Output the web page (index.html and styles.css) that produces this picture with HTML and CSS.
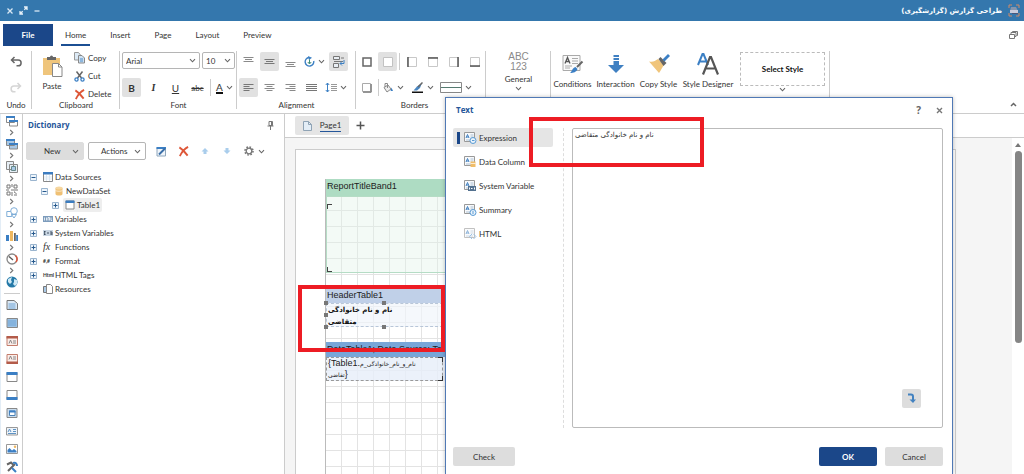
FILE: index.html
```
<!DOCTYPE html>
<html lang="en">
<head>
<meta charset="utf-8">
<title>Report designer</title>
<link rel="stylesheet" href="styles.css">
</head>
<body>
<svg class="defs" aria-hidden="true">
  <symbol id="chev" viewBox="0 0 7 7"><path d="M1 2.2 3.5 4.8 6 2.2" fill="none" stroke="#666" stroke-width="1.1"/></symbol>
  <symbol id="chev-r" viewBox="0 0 7 7"><path d="M2.2 1 4.8 3.5 2.2 6" fill="none" stroke="#777" stroke-width="1.1"/></symbol>
  <symbol id="cross" viewBox="0 0 12 12"><path d="M1.5 1.5C4 3 8 7 10.5 10.5M11 1C7 3 4 7 2 11" fill="none" stroke="#de5738" stroke-width="2"/></symbol>
  <symbol id="text-card" viewBox="0 0 12 12"><path d="M.5.5h10v9H.5z" fill="#f7f9fb" stroke="#999"/><path d="M2 6 3.5 2.500 5 6M2.500 5h2" fill="none" stroke="#3f7fc0"/><path d="M6.500 3h3M6.500 5h3M2 8h7" stroke="#9db4cb" stroke-width=".8"/></symbol>
  <symbol id="plus-box" viewBox="0 0 7 7"><path d="M.5.5h6v6h-6z" fill="#eef5fb" stroke="#9bb5cf"/><path d="M1.500 3.500h4M3.500 1.500v4" stroke="#27598d"/></symbol>
  <symbol id="minus-box" viewBox="0 0 7 7"><path d="M.5.5h6v6h-6z" fill="#eef5fb" stroke="#9bb5cf"/><path d="M1.500 3.500h4" stroke="#27598d"/></symbol>
  <symbol id="table" viewBox="0 0 10 10"><path d="M.5.5h9v9h-9z" fill="#fff" stroke="#888"/><path d="M0 0h10v2.500H0z" fill="#3b7cc0"/><path d="M3.500 3v6M6.500 3v6M1 5h8M1 7h8" stroke="#cfe0ee" stroke-width=".7"/></symbol>
</svg>

<div class="app">
  <header class="titlebar">
    <div class="window-buttons">
      <button aria-label="Close"><svg width="8" height="8" viewBox="0 0 8 8"><path d="M1.500 1.500l5 5M6.500 1.500l-5 5" stroke="#d9e8f4" stroke-width="1.300"/></svg></button>
      <button aria-label="Resize"><svg width="9" height="9" viewBox="0 0 9 9"><path d="M5 1h3v3M8 1 5.300 3.700M4 8H1V5M1 8l2.700-2.700" fill="none" stroke="#e6f1f9" stroke-width="1.300"/></svg></button>
      <button aria-label="Minimize"><svg width="8" height="8" viewBox="0 0 8 8"><path d="M1.500 4h5" stroke="#d9e8f4" stroke-width="1.300"/></svg></button>
    </div>
    <div class="window-title" dir="rtl">
      <svg width="12" height="13" viewBox="0 0 12 13"><path d="M1 4V1h3M8 1h3v3M11 9v3H8M4 12H1V9" fill="none" stroke="#d08b66"/><path d="M3 3h5l2 4H2z" fill="#8595ad"/><path d="M2 6h8v3H2z" fill="#c9ccdc"/><path d="M4 9h6v1H4z" fill="#4a5678"/></svg>
      <span>طراحی گزارش (گزارشگیری)</span>
    </div>
  </header>

  <nav class="tabs">
    <button class="tab file">File</button>
    <button class="tab home">Home</button>
    <button class="tab">Insert</button>
    <button class="tab">Page</button>
    <button class="tab">Layout</button>
    <button class="tab">Preview</button>
    <button class="restore" aria-label="Restore"><svg width="9" height="8" viewBox="0 0 9 8"><path d="M.5 3.500h5v4h-5zM2 3V1.500h5v4H6M3.500 1V.5h5v4H7.500" fill="none" stroke="#777"/></svg></button>
  </nav>

  <section class="ribbon">
    <div class="group undo">
      <button class="ib" aria-label="Undo"><svg width="12" height="12" viewBox="0 0 12 12"><path d="M4.500 1 1.500 4l3 3M2 4h6.200a2.800 2.800 0 0 1 0 5.800H6.500" fill="none" stroke="#666" stroke-width="1.500"/></svg></button>
      <button class="ib" aria-label="Redo"><svg width="12" height="12" viewBox="0 0 12 12"><path d="M7.500 1l3 3-3 3M10 4H4a2.800 2.800 0 0 0 0 5.800h1.500" fill="none" stroke="#d5d5d5" stroke-width="1.500"/></svg></button>
      <span class="cap">Undo</span>
    </div>
    <div class="group clipboard">
      <div class="clip-tools">
        <button class="paste"><svg width="21" height="22" viewBox="0 0 21 22"><path d="M1 3h17v17H1z" fill="#efc57c"/><path d="M5 5V2h3a1.500 1.500 0 0 1 3 0h3v3z" fill="#666"/><path d="M10.500 8.500h6l3.500 3.500v9.500h-9.500z" fill="#fff" stroke="#888"/><path d="M16.500 8.500V12H20" fill="none" stroke="#888"/></svg><span>Paste</span></button>
        <div class="clip-list">
          <button><svg width="11" height="12" viewBox="0 0 11 12"><path d="M.5.5h4L6.500 3v5h-6z" fill="#dceaf6" stroke="#999"/><path d="M4.500 3.500h3.500l2.500 2.500v5h-6z" fill="#cfe2f3" stroke="#888"/><path d="M6 7h3M6 9h3" stroke="#4d8cc8"/></svg>Copy</button>
          <button><svg width="11" height="11" viewBox="0 0 11 11"><path d="M2.500.5 7.500 7M8.500.5 3.500 7" stroke="#666" stroke-width="1.500"/><circle cx="2.500" cy="8.500" r="1.600" fill="none" stroke="#3b7fc4" stroke-width="1.300"/><circle cx="8.500" cy="8.500" r="1.600" fill="none" stroke="#3b7fc4" stroke-width="1.300"/></svg>Cut</button>
          <button><svg width="11" height="11"><use href="#cross"/></svg>Delete</button>
        </div>
      </div>
      <span class="cap">Clipboard</span>
    </div>
    <div class="group font">
      <div class="row">
        <label class="pick family"><select aria-label="Font"><option>Arial</option></select><svg width="7" height="7"><use href="#chev"/></svg></label>
        <label class="pick size"><select aria-label="Font size"><option>10</option></select><svg width="7" height="7"><use href="#chev"/></svg></label>
      </div>
      <div class="row spaced">
        <button class="ib on fb">B</button>
        <button class="ib fi">I</button>
        <button class="ib fu">U</button>
        <button class="ib fs">abc</button>
        <i class="sep"></i>
        <button class="ib drop fa"><span>A</span><svg width="7" height="7"><use href="#chev"/></svg></button>
      </div>
      <span class="cap">Font</span>
    </div>
    <div class="group align">
      <div class="row">
        <button class="ib" aria-label="Align top"><svg width="11" height="11" viewBox="0 0 11 11"><path d="M.5 1.500h10M2 3.500h7M.5 5.500h10" stroke="#8a8a8a"/></svg></button>
        <button class="ib on" aria-label="Align middle"><svg width="11" height="11" viewBox="0 0 11 11"><path d="M.5 3.500h10M2 5.500h7M.5 7.500h10" stroke="#777"/></svg></button>
        <button class="ib" aria-label="Align bottom"><svg width="11" height="11" viewBox="0 0 11 11"><path d="M.5 6.500h10M2 8.500h7M.5 10.500h10" stroke="#8a8a8a"/></svg></button>
        <button class="ib drop" aria-label="Rotate"><svg width="11" height="11" viewBox="0 0 11 11"><path d="M5 1.500a4.300 4.300 0 1 0 4.700 3.500" fill="none" stroke="#3d80c4" stroke-width="1.400"/><path d="M4 0l4 1.700L5 4z" fill="#3d80c4"/><path d="M5.500 3.500v4M3.800 6l1.700 2 1.700-2" fill="none" stroke="#3f8b75"/></svg><svg width="7" height="7"><use href="#chev"/></svg></button>
        <button class="ib on" aria-label="Wrap"><svg width="12" height="12" viewBox="0 0 12 12"><path d="M.5.5h6v3h-6zM.5 7.500h5v4h-5z" fill="#e9eef3" stroke="#777"/><path d="M1 5.500h9M8 2h3" stroke="#777"/><path d="M11 4v3.500H7M9 5.500l-2 2 2 2" fill="none" stroke="#3d80c4"/></svg></button>
      </div>
      <div class="row">
        <button class="ib on" aria-label="Left"><svg width="11" height="11" viewBox="0 0 11 11"><path d="M.5 2.500h10M.5 4.500h6M.5 6.500h10M.5 8.500h6" stroke="#777"/></svg></button>
        <button class="ib" aria-label="Center"><svg width="11" height="11" viewBox="0 0 11 11"><path d="M.5 2.500h10M2.500 4.500h6M.5 6.500h10M2.500 8.500h6" stroke="#8a8a8a"/></svg></button>
        <button class="ib" aria-label="Right"><svg width="11" height="11" viewBox="0 0 11 11"><path d="M.5 2.500h10M4.500 4.500h6M.5 6.500h10M4.500 8.500h6" stroke="#8a8a8a"/></svg></button>
        <button class="ib" aria-label="Justify"><svg width="11" height="11" viewBox="0 0 11 11"><path d="M0 2.500h11M0 4.500h11M0 6.500h11M0 8.500h11" stroke="#777"/></svg></button>
        <button class="ib drop" aria-label="Line spacing"><svg width="12" height="11" viewBox="0 0 12 11"><path d="M2.500 1v9M.8 3l1.700-2 1.700 2M.8 8l1.700 2 1.700-2" fill="none" stroke="#3d80c4"/><path d="M6 2.500h6M6 4.500h6M6 6.500h6M6 8.500h6" stroke="#999"/></svg><svg width="7" height="7"><use href="#chev"/></svg></button>
      </div>
      <span class="cap">Alignment</span>
    </div>
    <div class="group borders">
      <div class="row">
        <button class="ib" aria-label="All borders"><svg width="10" height="10" viewBox="0 0 10 10"><path d="M1 1h8v8H1z" fill="#fff" stroke="#666" stroke-width="1.500"/></svg></button>
        <button class="ib on" aria-label="No border"><svg width="10" height="10" viewBox="0 0 10 10"><path d="M.5.5h9v9h-9z" fill="#fff" stroke="#c2c2c2"/></svg></button>
        <i class="sep"></i>
        <button class="ib" aria-label="Left border"><svg width="10" height="10" viewBox="0 0 10 10"><path d="M.5.5h9v9h-9z" fill="#fff" stroke="#c8c8c8"/><path d="M1 0v10" stroke="#555" stroke-width="1.500"/></svg></button>
        <button class="ib" aria-label="Top border"><svg width="10" height="10" viewBox="0 0 10 10"><path d="M.5.5h9v9h-9z" fill="#fff" stroke="#c8c8c8"/><path d="M0 1h10" stroke="#555" stroke-width="1.500"/></svg></button>
        <button class="ib" aria-label="Right border"><svg width="10" height="10" viewBox="0 0 10 10"><path d="M.5.5h9v9h-9z" fill="#fff" stroke="#c8c8c8"/><path d="M9 0v10" stroke="#555" stroke-width="1.500"/></svg></button>
        <button class="ib" aria-label="Bottom border"><svg width="10" height="10" viewBox="0 0 10 10"><path d="M.5.5h9v9h-9z" fill="#fff" stroke="#c8c8c8"/><path d="M0 9h10" stroke="#555" stroke-width="1.500"/></svg></button>
      </div>
      <div class="row">
        <button class="ib" aria-label="Shadow"><svg width="10" height="10" viewBox="0 0 10 10"><path d="M.5.5h8v8h-8z" fill="#fff" stroke="#aaa"/><path d="M1 9.200h8.200V1" fill="none" stroke="#666"/></svg></button>
        <i class="sep"></i>
        <button class="ib drop" aria-label="Fill"><svg width="11" height="11" viewBox="0 0 11 11"><path d="M1 5.500 5 3l3 4-4 3z" fill="#eee" stroke="#888"/><path d="M2 5V1.500h2.500V6" fill="none" stroke="#888"/><path d="M8.500 5.500 10 9H7.500z" fill="#3d80c4"/></svg><svg width="7" height="7"><use href="#chev"/></svg></button>
        <button class="ib drop pen" aria-label="Border color"><svg width="12" height="12" viewBox="0 0 12 12"><path d="M1.500 8.500 5 4.500l5-3.500-2 5-3 2.500z" fill="#4a87c2"/><path d="M6 5l4.500-4.500" stroke="#666" stroke-width="1.500"/><path d="M0 9.500h11v1.500H0z" fill="#111"/></svg><svg width="7" height="7"><use href="#chev"/></svg></button>
        <button class="ib drop" aria-label="Border style"><svg width="22" height="11" viewBox="0 0 22 11"><path d="M.5.5h21v10H.5z" fill="#fff" stroke="#888"/><path d="M1 5.500h20" stroke="#557a70"/></svg><svg width="7" height="7"><use href="#chev"/></svg></button>
      </div>
      <span class="cap">Borders</span>
    </div>
    <div class="group general">
      <button class="format"><b>ABC</b><b>123</b><span>General</span><svg width="7" height="7"><use href="#chev"/></svg></button>
    </div>
    <div class="group style">
      <button class="big"><svg width="22" height="22" viewBox="0 0 22 22"><path d="M1 2.500h17v15H1z" fill="#fafafa" stroke="#aaa"/><path d="M3 10.500 5.500 4.500 8 10.500M4 8.500h3" fill="none" stroke="#555" stroke-width="1.300"/><path d="M10 5.500h6M10 8h6M10 10.500h6M3 13h7M3 15h5" stroke="#aaa"/><path d="M20.500 8.500 15 14" stroke="#666" stroke-width="2"/><path d="M8 20c2-1 2-5 5.500-6l2 2c-1 3-4 4-7.500 4z" fill="#3b7fc4"/></svg><span>Conditions</span></button>
      <button class="big"><svg width="22" height="22" viewBox="0 0 22 22"><path d="M8.500 2h5.500v2H8.500zM8.500 5h5.500v2H8.500zM8.500 8h5.500v4h5L11 20 3 12h5.500z" fill="#3f80c2"/></svg><span>Interaction</span></button>
      <button class="big"><svg width="22" height="22" viewBox="0 0 22 22"><path d="M1 8.500c4 1 6-.5 9-2.500l6 6c-2 3-3 5-5 8z" fill="#f0c57b"/><path d="M10.500 6 12.500 4l6 6-3 3z" fill="#666"/><path d="M15.500 7.500 21 2" stroke="#3b7fc4" stroke-width="2.800"/></svg><span>Copy Style</span></button>
      <button class="big wide"><svg width="22" height="22" viewBox="0 0 22 22"><path d="M1 12 5.500 1h1L11 12M2.500 8.500h7" fill="none" stroke="#3b7fc4" stroke-width="2"/><path d="M6 21.500 13 4h1l7 17.500M8.500 15.500h10" fill="none" stroke="#555" stroke-width="2.200"/></svg><span>Style Designer</span></button>
      <button class="select-style"><span>Select Style</span><svg width="7" height="7"><use href="#chev"/></svg></button>
    </div>
    <button class="collapse" aria-label="Collapse ribbon"><svg width="7" height="7" viewBox="0 0 7 7"><path d="M1 5l2.500-2.500L6 5" fill="none" stroke="#666" stroke-width="1.500"/></svg></button>
  </section>

  <main class="work">
    <aside class="toolbox">
      <button aria-label="Bands"><svg width="12" height="12" viewBox="0 0 12 12"><path d="M.5 1.500h8v6h-8zM3.500 5.500h8v5.500h-8z" fill="#fff" stroke="#888"/><path d="M0 1h9v2H0zM3 5h9v2H3z" fill="#3b7fc4"/></svg></button><svg class="more"><use href="#chev-r"/></svg>
      <button aria-label="Cross bands"><svg width="12" height="12" viewBox="0 0 12 12"><path d="M.5 1.500h8v6h-8zM3.500 5.500h8v5.500h-8z" fill="#a8c8e6" stroke="#888"/><path d="M0 1h9v2H0zM3 5h9v2H3z" fill="#3b7fc4"/></svg></button><svg class="more"><use href="#chev-r"/></svg>
      <button aria-label="Components"><svg width="12" height="12" viewBox="0 0 12 12"><path d="M.5.5h7v8h-7zM3.500 3.500h8v8h-8z" fill="#e6eef5" stroke="#888"/><path d="M5.500 5.500h4v4h-4z" fill="#a8c8e6" stroke="#688"/></svg></button><svg class="more"><use href="#chev-r"/></svg>
      <button aria-label="Barcodes"><svg width="12" height="12" viewBox="0 0 12 12"><path d="M1 1h3v3H1zM8 1h3v3H8zM1 8h3v3H1zM6 0v3M5 6h7M0 6h3M6 8v4M8 8h1v1M10 9v3M8 11h1" fill="none" stroke="#777"/></svg></button><svg class="more"><use href="#chev-r"/></svg>
      <button aria-label="Shapes"><svg width="12" height="12" viewBox="0 0 12 12"><path d="M.8 4.500h5v5h-5z" fill="#fff" stroke="#7faed8"/><circle cx="8" cy="4" r="3.300" fill="#fff" stroke="#7faed8"/><path d="M8 11 5.500 7.500h5z" fill="#fff" stroke="#7faed8"/></svg></button><svg class="more"><use href="#chev-r"/></svg>
      <button aria-label="Charts"><svg width="12" height="12" viewBox="0 0 12 12"><path d="M0 5h3v6H0z" fill="#3b7fc4"/><path d="M4 1h3v10H4z" fill="#efb860"/><path d="M8 3h1.800v8H8z" fill="#666"/><path d="M10.200 5H12v6h-1.800z" fill="#3b7fc4"/></svg></button><svg class="more"><use href="#chev-r"/></svg>
      <button aria-label="Gauges"><svg width="12" height="12" viewBox="0 0 12 12"><circle cx="6" cy="6" r="5" fill="#fff" stroke="#888" stroke-width="1.300"/><path d="M9.500 2.500A5 5 0 0 1 10 9" fill="none" stroke="#d9563c" stroke-width="1.500"/><path d="M3 3.500 7 7" stroke="#555" stroke-width="1.300"/></svg></button><svg class="more"><use href="#chev-r"/></svg>
      <button aria-label="Maps"><svg width="12" height="12" viewBox="0 0 12 12"><circle cx="6" cy="6" r="5.500" fill="#2479a8"/><path d="M2 3l4-2-1 3 1 2-2 2-2-2zM8 3l3 1v4L9 10 7 8l1-2z" fill="#cfe9f5"/></svg></button>
      <hr>
      <button class="plain" aria-label="Report title"><svg width="12" height="12" viewBox="0 0 12 12"><path d="M1 1.500h7l3.500 3v6H1z" fill="#dce9f5" stroke="#777"/><path d="M2.500 5h7M2.500 7h7M2.500 9h7" stroke="#6ea3d4"/></svg></button>
      <button class="plain" aria-label="Data band"><svg width="12" height="12" viewBox="0 0 12 12"><path d="M1 1.500h10.500v9H1z" fill="#9cc3e6" stroke="#888"/><path d="M2 4h8M2 6h8M2 8h8" stroke="#6ea3d4"/></svg></button>
      <button class="plain" aria-label="Page header"><svg width="12" height="12" viewBox="0 0 12 12"><path d="M1 1.500h10.500v9H1z" fill="#fbeeea" stroke="#c37d6c"/><path d="M.5 1h11.500v2.500H.5z" fill="#b35b49"/><path d="M3 8.500 4.500 5 6 8.500M7 6h3M7 8h3" fill="none" stroke="#888"/></svg></button>
      <button class="plain" aria-label="Page footer"><svg width="12" height="12" viewBox="0 0 12 12"><path d="M1 1.500h10.500v9H1z" fill="#fbeeea" stroke="#c37d6c"/><path d="M.5 8.500h11.500V11H.5z" fill="#b35b49"/><path d="M3 6.500 4.500 3 6 6.500M7 4h3M7 6h3" fill="none" stroke="#888"/></svg></button>
      <button class="plain" aria-label="Header"><svg width="12" height="12" viewBox="0 0 12 12"><path d="M1 1.500h10v9H1z" fill="#fff" stroke="#888"/><path d="M.5 1h11v3H.5z" fill="#3b7fc4"/></svg></button>
      <button class="plain" aria-label="Footer"><svg width="12" height="12" viewBox="0 0 12 12"><path d="M1 1.500h10v9H1z" fill="#fff" stroke="#888"/><path d="M.5 8h11v3H.5z" fill="#3b7fc4"/></svg></button>
      <button class="plain" aria-label="Panel"><svg width="12" height="12" viewBox="0 0 12 12"><path d="M1 1.500h10v9H1z" fill="#c9ddef" stroke="#888"/><path d="M3.500 4h5.500v4.500H3.500z" fill="#fff" stroke="#4c82b6"/><path d="M3 3.500h6.500v2H3z" fill="#3b7fc4"/></svg></button>
      <button class="plain" aria-label="Text"><svg width="12" height="12" viewBox="0 0 12 12"><path d="M.5 2.500h11v7.500H.5z" fill="#eef4fa" stroke="#999"/><path d="M2 7 3.500 4 5 7M7 4.500h3M7 6.500h3M2 8.500h8" fill="none" stroke="#5f93c4"/></svg></button>
      <button class="plain" aria-label="Image"><svg width="12" height="12" viewBox="0 0 12 12"><path d="M.5 1.500h11v9H.5z" fill="#fff" stroke="#999"/><path d="M1.500 9.500V7l2-2 2.500 2.500L8 6l2.500 2v1.500z" fill="#3b7fc4"/><circle cx="9" cy="3.700" r="1.200" fill="#efb860"/></svg></button>
      <button class="plain" aria-label="Tools"><svg width="12" height="12" viewBox="0 0 12 12"><path d="M2 10l7-7M1 3.500l4-2 2 2" fill="none" stroke="#666" stroke-width="2"/><path d="M7 2c3-1 4 1 4 3M6 7l4 4" fill="none" stroke="#3b7fc4" stroke-width="2"/></svg></button>
    </aside>

    <aside class="dictionary">
      <div class="panel-head"><h2>Dictionary</h2><svg width="7" height="9" viewBox="0 0 7 9"><path d="M2 .5h3.500v4H2zM.5 5h6M3.500 5v4" fill="none" stroke="#777"/><path d="M4 1h1.500v4H4z" fill="#777"/></svg></div>
      <div class="panel-tools">
        <button class="menu gray"><span>New</span><svg width="7" height="7"><use href="#chev"/></svg></button>
        <button class="menu"><span>Actions</span><svg width="7" height="7"><use href="#chev"/></svg></button>
        <button class="pt" aria-label="Edit"><svg width="11" height="11" viewBox="0 0 11 11"><path d="M1 1.500h8.500V10H1z" fill="#f0f5fa" stroke="#8ea6bc"/><path d="M.5 1h9.500v2H.5z" fill="#3b7fc4"/><path d="M3 8.500l6-6" stroke="#3b6fa8" stroke-width="2"/></svg></button>
        <button class="pt" aria-label="Delete"><svg width="11" height="11"><use href="#cross"/></svg></button>
        <button class="pt" aria-label="Move up"><svg width="8" height="8" viewBox="0 0 8 8"><path d="M4 1l3.500 3.500H5.500V7h-3V4.500h-2z" fill="#a9cdec"/></svg></button>
        <button class="pt" aria-label="Move down"><svg width="8" height="8" viewBox="0 0 8 8"><path d="M4 7 .5 3.500h2V1h3v2.500h2z" fill="#a9cdec"/></svg></button>
        <button class="pt gear" aria-label="Settings"><svg width="10" height="10" viewBox="0 0 10 10"><circle cx="5" cy="5" r="4" fill="none" stroke="#777" stroke-width="1.600" stroke-dasharray="1.600 1.540"/><circle cx="5" cy="5" r="2.800" fill="none" stroke="#777" stroke-width="1.300"/></svg><svg width="7" height="7"><use href="#chev"/></svg></button>
      </div>
      <ul class="tree">
        <li><svg class="box"><use href="#minus-box"/></svg><svg class="ti" viewBox="0 0 10 10"><use href="#table"/></svg><span>Data Sources</span></li>
        <li class="l2"><svg class="box"><use href="#minus-box"/></svg><svg class="ti" viewBox="0 0 10 10"><path d="M1.500 2v6c0 2 7 2 7 0V2z" fill="#efc074"/><ellipse cx="5" cy="2" rx="3.500" ry="1.500" fill="#f6d7a0"/><path d="M1.500 4.500c1 1 6 1 7 0" fill="none" stroke="#fff" stroke-width=".6"/></svg><span>NewDataSet</span></li>
        <li class="l3"><svg class="box"><use href="#plus-box"/></svg><span class="picked"><svg class="ti" viewBox="0 0 10 10"><path d="M1 1h8v8H1z" fill="#fff" stroke="#888"/><path d="M.5.5h9v2.500h-9z" fill="#3b7cc0"/></svg><span>Table1</span></span></li>
        <li><svg class="box"><use href="#plus-box"/></svg><svg class="ti" viewBox="0 0 10 10"><path d="M0 2h10v6H0z" fill="#7d9cbc"/><path d="M1.500 3.500v3M3.500 3.500v3M5 6.500v-3h1.500v3M8 3.500v3h1" fill="none" stroke="#fff" stroke-width=".8"/></svg><span>Variables</span></li>
        <li><svg class="box"><use href="#plus-box"/></svg><svg class="ti" viewBox="0 0 10 10"><path d="M0 2h10v6H0z" fill="#c9d6e3"/><path d="M1 3.500h1.500M1 6.500h1.500M1.700 3.500v3M4 5h2M8 3v4M9 4v3" fill="none" stroke="#345" stroke-width=".9"/></svg><span>System Variables</span></li>
        <li><svg class="box"><use href="#plus-box"/></svg><i class="ti fx">fx</i><span>Functions</span></li>
        <li><svg class="box"><use href="#plus-box"/></svg><b class="ti fmt">#,#</b><span>Format</span></li>
        <li><svg class="box"><use href="#plus-box"/></svg><b class="ti fmt">Html</b><span>HTML Tags</span></li>
        <li><i class="box"></i><svg class="ti" viewBox="0 0 10 10"><path d="M.5 2.500h5v6h-5z" fill="#a9c9e6" stroke="#777"/><path d="M3.500.5h4l2 2v7h-6z" fill="#fff" stroke="#888"/></svg><span>Resources</span></li>
      </ul>
    </aside>

    <section class="designer">
      <div class="page-tabs">
        <button class="page-tab"><svg width="9" height="10" viewBox="0 0 9 10"><path d="M.5.5h5l3 3v6h-8z" fill="#e3edf6" stroke="#8fa3b5"/><path d="M5.500.5v3h3" fill="none" stroke="#8fa3b5"/></svg><span>Page1</span></button>
        <button class="add" aria-label="Add page"><svg width="9" height="9" viewBox="0 0 9 9"><path d="M.5 4.500h8M4.500.5v8" stroke="#555" stroke-width="1.500"/></svg></button>
      </div>
      <div class="canvas">
        <div class="sheet">
          <div class="bands">
            <div class="band-name green">ReportTitleBand1</div>
            <div class="band title-body"></div>
            <div class="gap"></div>
            <div class="band-name pale">HeaderTable1</div>
            <div class="band head-body">
              <div class="cell selected">نام و نام خانوادگی<br>متقاضی<i class="h a"></i><i class="h b"></i><i class="h c"></i><i class="h d"></i><i class="h e"></i><i class="h f"></i></div>
            </div>
            <div class="gap"></div>
            <div class="band-name blue">DataTable1; Data Source: Table1</div>
            <div class="band data-body"><div class="cell corners">{Table1.<span>نام_و_نام_خانوادگی_م</span><br><span>تقاضی</span>}</div></div>
          </div>
        </div>
        <div class="scroll"><i class="arrow"></i><i class="thumb"></i></div>
      </div>
    </section>
  </main>

  <section class="dialog" role="dialog" aria-label="Text">
    <div class="dialog-head"><h2>Text</h2><button class="help">?</button><button aria-label="Close"><svg width="7" height="7" viewBox="0 0 7 7"><path d="M1 1l5 5M6 1 1 6" stroke="#777" stroke-width="1.400"/></svg></button></div>
    <div class="dialog-body">
      <nav>
        <button class="item active"><svg width="13" height="12" viewBox="0 0 13 12"><use href="#text-card" width="12" height="12"/><circle cx="9" cy="8.500" r="3" fill="#eaf3fb" stroke="#5a9bd4"/><path d="M8 8.500h2.500" stroke="#5a9bd4"/></svg>Expression</button>
        <button class="item"><svg width="13" height="12" viewBox="0 0 13 12"><use href="#text-card" width="12" height="12"/><path d="M6.500 5.500h5V11h-5z" fill="#f0bd69"/><path d="M6.500 7.500h5" stroke="#fff" stroke-width=".7"/></svg>Data Column</button>
        <button class="item"><svg width="13" height="12" viewBox="0 0 13 12"><use href="#text-card" width="12" height="12"/><path d="M4 6h8v5H4z" fill="#53718f"/><path d="M5.500 7.500v2M7 8.500h1.500M10.500 7.500v2" stroke="#fff"/></svg>System Variable</button>
        <button class="item"><svg width="13" height="12" viewBox="0 0 13 12"><use href="#text-card" width="12" height="12"/><circle cx="9" cy="8.500" r="3" fill="#eaf3fb" stroke="#5a9bd4"/><path d="M9 7v3" stroke="#5a9bd4"/></svg>Summary</button>
        <button class="item faint"><svg width="13" height="12" viewBox="0 0 13 12"><use href="#text-card" width="12" height="12"/><path d="M8 6 5.500 8.500 8 11M9.500 6 12 8.500 9.500 11" fill="none" stroke="#5a9bd4"/></svg>HTML</button>
      </nav>
      <div class="editor">
        <textarea aria-label="Expression" spellcheck="false">نام و نام خانوادگی متقاضی</textarea>
        <button class="insert" aria-label="Insert"><svg width="11" height="11" viewBox="0 0 11 11"><path d="M2 1.500h3A2 2 0 0 1 7 3.500V8" fill="none" stroke="#4382c0" stroke-width="2"/><path d="M3.500 6.500h6.500L7 10z" fill="#4382c0"/></svg></button>
      </div>
    </div>
    <div class="dialog-foot"><button>Check</button><span></span><button class="ok">OK</button><button>Cancel</button></div>
  </section>
  <div class="mark m1"></div>
  <div class="mark m2"></div>
</div>
</body>
</html>
```
FILE: styles.css
```
* { box-sizing: border-box; }
html, body { margin: 0; height: 100%; }
body { font: 8px/12px Lato, "Open Sans", sans-serif; color: #333; background: #fff; overflow: hidden; }
button { font: inherit; color: inherit; background: none; border: 0; padding: 0; margin: 0; display: flex; align-items: center; justify-content: center; }
h2 { font: 700 8px/12px "Open Sans", sans-serif; color: #25569a; margin: 0; }
svg { display: block; flex: none; }
.defs { position: absolute; width: 0; height: 0; }
.app { position: relative; height: 100vh; display: flex; flex-direction: column; }

.titlebar { height: 21px; flex: none; background: #3477ad; display: flex; align-items: center; justify-content: space-between; padding: 0 4px 0 6px; }
.window-buttons { display: flex; gap: 5px; }
.window-title { display: flex; align-items: center; gap: 6px; color: #fff; font: 700 7px/12px "DejaVu Sans", sans-serif; }

.tabs { height: 25px; flex: none; display: flex; align-items: center; padding: 2px 6px 0 3px; gap: 16px; }
.tab { height: 22px; padding: 0 4px; }
.file { width: 50px; background: #1b4789; color: #fff; font-weight: 700; margin-right: -8px; }
.home { border-bottom: 2px solid #1b4f93; padding-top: 2px; }
.restore { margin-left: auto; }

.ribbon { height: 68px; flex: none; display: flex; border-bottom: 1px solid #ccc; }
.group { display: flex; flex-direction: column; gap: 7px; padding: 6px 2px 0; position: relative; }
.group::after { content: ""; position: absolute; right: 0; top: 5px; bottom: 4px; width: 1px; background: #ccc; }
.row { display: flex; height: 19px; gap: 2px; align-items: center; }
.cap { margin-top: -5px; text-align: center; }
.ib { width: 19px; height: 19px; border-radius: 2px; flex: none; }
.on { background: #e1e1e1; }
.drop { width: auto; gap: 3px; padding: 0 2px; }
.sep { width: 1px; height: 17px; background: #ccc; }
.undo { width: 32px; align-items: center; }
.clipboard { width: 88px; }
.clip-tools { display: flex; height: 45px; gap: 10px; padding-left: 6px; }
.paste { flex-direction: column; justify-content: flex-start; padding-top: 3px; gap: 3px; width: 24px; }
.clip-list { display: flex; flex-direction: column; gap: 6px; }
.clip-list button { gap: 3px; height: 12px; justify-content: flex-start; }
.font { width: 117px; }
.font .spaced { gap: 3px; }
.pick { position: relative; display: block; margin-top: -2px; }
.pick select { appearance: none; width: 100%; height: 17px; border: 1px solid #b5b5b5; border-radius: 2px; background: #fff; font: inherit; color: #333; padding: 0 3px; }
.pick svg { position: absolute; right: 4px; top: 5px; pointer-events: none; }
.family { width: 78px; }
.size { width: 33px; }
.fb { font-weight: 700; font-size: 10px; }
.fi { font: italic 700 10px "Liberation Serif", serif; }
.fu { font-size: 10px; text-decoration: underline; }
.fs { text-decoration: line-through; }
.fa span { font-size: 10px; line-height: 10px; border-bottom: 2px solid #111; }
.align { width: 119px; }
.borders { width: 130px; padding-left: 1px; }
.borders .cap { padding-right: 12px; }
.pen { padding-left: 4px; }
.general { width: 65px; align-items: center; }
.format { flex-direction: column; width: 50px; }
.format b { font: 10px/10px "Liberation Sans", sans-serif; color: #8a8a8a; }
.format span { margin-top: 1px; }
.style { width: 279px; flex-direction: row; gap: 0; padding-left: 0; }
.big { flex-direction: column; justify-content: flex-start; gap: 3px; width: 43px; padding-top: 1px; height: 45px; white-space: nowrap; }
.wide { width: 56px; }
.select-style { flex-direction: column; justify-content: flex-start; width: 85px; margin-left: 4px; color: #111; font-weight: 700; }
.select-style span { border: 1px dashed #bbb; width: 100%; height: 34px; line-height: 32px; }
.collapse { margin: auto 7px 5px auto; }

.work { flex: 1; min-height: 0; display: flex; }
.toolbox { width: 23px; border-right: 1px solid #ccc; border-left: 1px solid #e3edf6; display: flex; flex-direction: column; align-items: center; overflow: hidden; padding-top: 1px; }
.toolbox button { height: 12px; flex: none; }
.more { width: 7px; height: 7px; margin: 2px 0; }
.toolbox hr { width: 16px; height: 1px; flex: none; border: 0; background: #ccc; margin: 5px 0 2px; }
.toolbox .plain { height: 18px; }
.dictionary { width: 262px; border-right: 1px solid #ccc; }
.panel-head { display: flex; justify-content: space-between; align-items: center; padding: 5px 10px 0 5px; }
.panel-tools { display: flex; align-items: center; padding: 11px 3px 0; }
.menu { width: 58px; height: 18px; border: 1px solid #b5b5b5; border-radius: 2px; margin-right: 4px; justify-content: space-between; padding: 0 4px 0 12px; }
.gray { background: #ddd; border-color: #ddd; padding-left: 17px; }
.pt { width: 22px; height: 18px; }
.gear { width: 32px; gap: 4px; }
.tree { list-style: none; margin: 10px 0 0; padding: 0 0 0 7px; }
.tree li { height: 14px; display: flex; align-items: center; }
.box { width: 7px; height: 7px; margin-right: 6px; flex: none; }
.ti { width: 10px; height: 10px; margin-right: 2px; flex: none; }
.tree .l2 { padding-left: 11px; }
.tree .l3 { padding-left: 22px; }
.picked { display: flex; align-items: center; background: #eee; border-radius: 2px; height: 14px; padding: 0 2px; margin-left: -2px; }
.fx { font: italic 10px/10px "Liberation Serif", serif; }
.fmt { font-size: 5px; line-height: 10px; }

.designer { flex: 1; min-width: 0; display: flex; flex-direction: column; }
.page-tabs { height: 24px; flex: none; border-bottom: 1px solid #ccc; display: flex; align-items: center; padding: 0 10px; gap: 7px; }
.page-tab { width: 54px; height: 19px; background: #e5e5e5; border-radius: 2px; gap: 8px; }
.page-tab span { border-bottom: 1px solid #25569a; line-height: 11px; }
.canvas { flex: 1; min-height: 0; background: #f5f5f5; display: flex; padding: 0 0 0 10px; }
.sheet { flex: 1; margin: 11px 56px 0 0; background: #fff; border: 1px solid #ccc; border-bottom: 0; padding: 29px 29px 0; overflow: hidden; }
.bands { height: 100%; border-left: 1px solid #bbb; font: 9px/15px "Liberation Sans", "DejaVu Sans", sans-serif; color: #222;
  background-image: linear-gradient(to right, transparent 15px, #e3e3e3 15px), linear-gradient(transparent 15px, #e3e3e3 15px); background-size: 16px 16px; }
.band-name { height: 15px; padding-left: 1px; white-space: nowrap; overflow: hidden; }
.green { height: 17px; background: #aedcc3; }
.pale { background: #c0d0e8; }
.blue { background: #78a6d8; }
.title-body { position: relative; height: 77px; background: #e1f3e966; border: 1px solid #b5dcc5; }
.title-body::before, .title-body::after { content: ""; position: absolute; left: 0; width: 4px; height: 4px; border-left: 1px solid #444; }
.title-body::before { top: 7px; border-top: 1px solid #444; }
.title-body::after { bottom: 0; border-bottom: 1px solid #444; }
.gap { height: 15px; }
.head-body { height: 24px; background: #f0f5fbaa; }
.data-body { height: 24px; background: #e6eef9cc; }
.cell { position: relative; width: 117px; height: 24px; font: 9px/11px "Liberation Sans", "DejaVu Sans", sans-serif; padding-left: 1px; border: 1px dashed #999; white-space: nowrap; }
.cell span { font: 6px/11px "DejaVu Sans", sans-serif; }
.selected { font: 700 7px/12px "DejaVu Sans", sans-serif; color: #111; border: 1px dashed #b8c6d8; }
.corners::before, .corners::after { content: ""; position: absolute; right: -1px; width: 4px; height: 4px; border-right: 1px solid #333; }
.corners::before { top: -1px; border-top: 1px solid #333; }
.corners::after { bottom: -1px; border-bottom: 1px solid #333; }
.h { position: absolute; width: 4px; height: 4px; background: #777; }
.a { left: -3px; top: -3px; } .b { left: 55px; top: -3px; } .c { right: -3px; top: -3px; }
.d { left: -3px; top: 9px; } .e { left: -3px; bottom: -3px; } .f { left: 55px; bottom: -3px; }
.scroll { width: 12px; background: #fff; display: flex; flex-direction: column; align-items: center; padding-top: 5px; }
.arrow { border: 3px solid transparent; border-top: 0; border-bottom: 4px solid #777; }
.thumb { width: 7px; height: 192px; margin-top: 4px; border-radius: 4px; background: #858585; }

.dialog { position: absolute; left: 445px; right: 71px; top: 97px; bottom: 0; background: #fff; border: 1px solid #5079b5; border-bottom: 0; box-shadow: 0 0 4px #0004; display: flex; flex-direction: column; padding: 0 9px 8px 7px; }
.dialog-head { display: flex; align-items: center; height: 24px; gap: 15px; padding-left: 3px; }
.dialog-head h2 { margin-right: auto; }
.help { font: 700 10px/12px "Open Sans", sans-serif; color: #666; }
.dialog-body { flex: 1; display: flex; min-height: 0; padding-top: 6px; }
.dialog nav { width: 111px; border-right: 1px dashed #ddd; padding-right: 10px; display: flex; flex-direction: column; gap: 5px; }
.item { height: 19px; gap: 2px; justify-content: flex-start; padding-left: 11px; border-radius: 2px; }
.active { position: relative; background: #e5e5e5; }
.active::before { content: ""; position: absolute; left: 4px; top: 4px; bottom: 3px; width: 3px; background: #1b4789; }
.faint svg { opacity: .6; }
.editor { flex: 1; position: relative; padding-left: 8px; display: flex; }
.editor textarea { width: 100%; resize: none; border: 1px solid #bbb; border-radius: 2px; padding: 0 2px; font: 7px/12px "DejaVu Sans", sans-serif; color: #333; direction: ltr; }
.insert { position: absolute; right: 22px; bottom: 20px; width: 19px; height: 19px; background: #ddd; border-radius: 2px; }
.dialog-foot { display: flex; gap: 8px; padding-top: 19px; }
.dialog-foot span { flex: 1; }
.dialog-foot button { width: 58px; height: 19px; background: #ddd; border-radius: 2px; }
.dialog-foot button:first-child { width: 62px; }
.dialog-foot .ok { background: #1b4789; color: #fff; font-weight: 700; }

.mark { position: absolute; border: 4px solid #ed1c24; pointer-events: none; }
.m1 { left: 298px; top: 285px; width: 147px; height: 67px; }
.m2 { left: 529px; top: 117px; width: 175px; height: 50px; }
```
